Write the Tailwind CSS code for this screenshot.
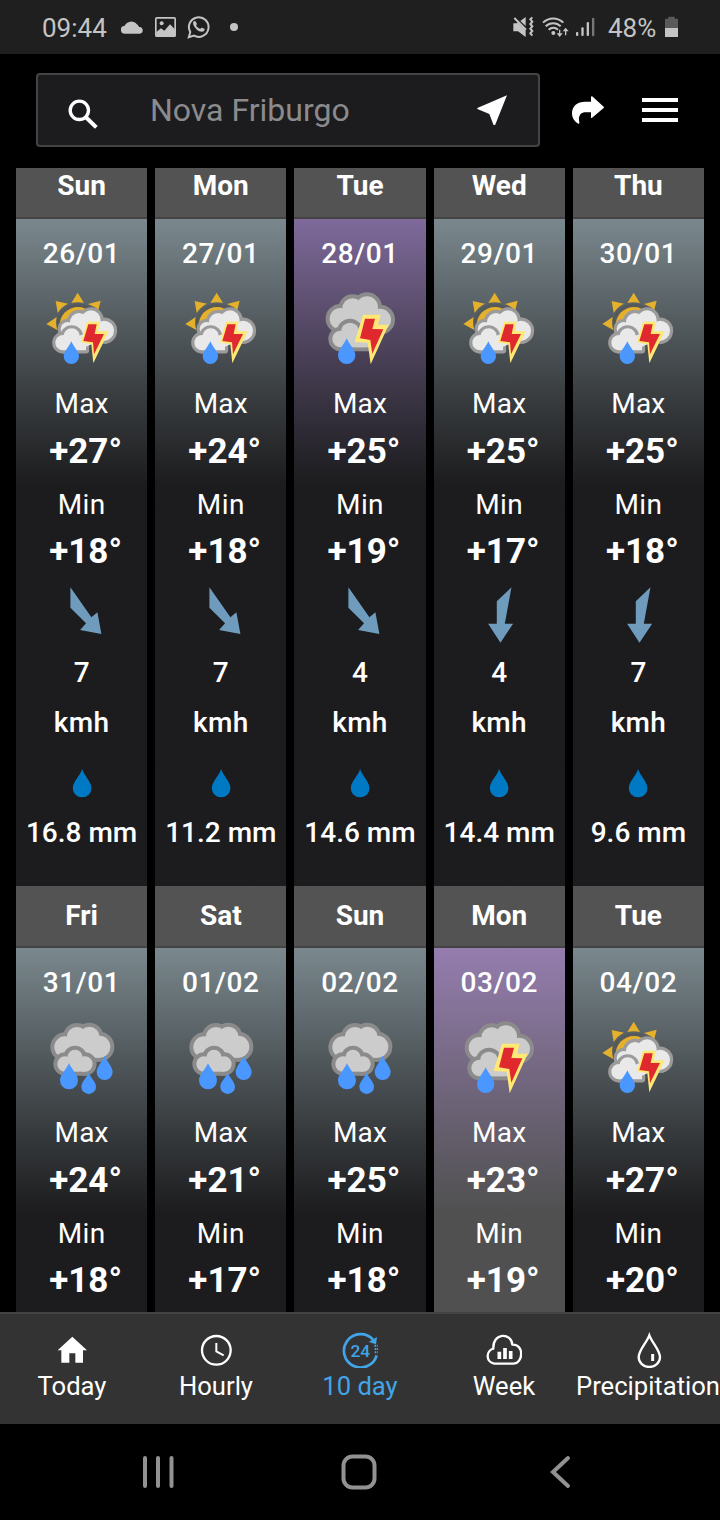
<!DOCTYPE html>
<html lang="en">
<head>
  <meta charset="UTF-8" />
  <meta name="viewport" content="width=device-width, initial-scale=1.0" />
  <title>10 day forecast</title>
  <script src="https://cdn.jsdelivr.net/npm/@tailwindcss/browser@4"></script>
</head>
<body class="bg-black">
  <div class="flex h-[1520px] w-[720px] flex-col overflow-hidden bg-black font-['Roboto',sans-serif] text-white">

    <!-- Status bar -->
    <div class="flex h-[54px] shrink-0 items-center bg-[#1f1f1f] pl-[42px] text-[26px] text-[#c4c4c4]">
      <span class="w-[66px] pt-[2px] leading-none">09:44</span>
      <svg class="ml-[13px] h-[14px] w-[23px]" viewBox="0 0 69 40" fill="currentColor">
        <path d="M12 40a12 12 0 0 1-1-24 22 22 0 0 1 36-5c4 3 6 6 7 9a10 10 0 0 1 2 20z" />
      </svg>
      <svg class="ml-[11px] h-[20px] w-[21px]" viewBox="0 0 63 60" fill="none">
        <rect x="2.5" y="2.5" width="58" height="55" rx="3" stroke="currentColor" stroke-width="5" />
        <circle cx="20" cy="19" r="6" fill="currentColor" />
        <path d="M4 45l14-11 10 7 17-19 16 16v20H4z" fill="currentColor" />
      </svg>
      <svg class="ml-[11px] h-[24px] w-[24px]" viewBox="0 0 24 24" fill="currentColor">
        <path d="M1.8 22.2l1.5-5.2a9.8 9.8 0 1 1 3.7 3.6z" fill="none" stroke="currentColor" stroke-width="2" />
        <path d="M8.6 6.5c-.4-.8-1.8-.6-2.3.6-1 2.4 1.3 5.4 3.4 7.3 2.3 2 5.8 3.2 7.400 1.400.7-.8.8-1.700.2-2l-2.300-1.100c-.5-.2-.8 0-1.500 1-.4.5-3.800-1.700-4.300-3.300-.1-.4.9-1.200.7-1.700z" />
      </svg>
      <span class="ml-[19px] size-[8px] rounded-full bg-[#c4c4c4]"></span>

      <svg class="ml-[275px] h-[22px] w-[21px]" viewBox="0 0 63 66">
        <path d="M1 22h10l3-3 24 24v20L15 46H1z" fill="currentColor" />
        <path d="M22 15L38 3v27z" fill="currentColor" />
        <path d="M4 6l35 35" stroke="currentColor" stroke-width="6" />
        <path d="M58 4l-6 6 6 7-6 7 6 7-6 7 6 7-6 7 6 7" fill="none" stroke="currentColor" stroke-width="6" />
      </svg>
      <svg class="ml-[8px] h-[22px] w-[27px]" viewBox="0 0 81 66" fill="none" stroke="currentColor" stroke-width="6">
        <path d="M3 20a43 43 0 0 1 61 0M11 31a32 32 0 0 1 45 0M20 41a20 20 0 0 1 28 0" />
        <circle cx="34" cy="51" r="6" fill="currentColor" stroke="none" />
        <path d="M53 41v16M71 58V42" stroke-width="4" />
        <path d="M44 52h18l-9 11zM62 46h18L71 35z" fill="currentColor" stroke="none" />
      </svg>
      <svg class="ml-[7px] h-[20px] w-[19px]" viewBox="0 0 57 60" fill="currentColor">
        <rect x="0" y="45" width="7" height="12" rx="3" />
        <rect x="16" y="31" width="7" height="26" rx="3" />
        <rect x="32" y="15" width="7" height="42" rx="3" />
        <rect x="48" y="2" width="7" height="56" rx="3" fill="#777" />
      </svg>
      <span class="ml-[13px] w-[51px] pt-[2px] leading-none">48%</span>
      <svg class="ml-[6px] h-[22px] w-[13px]" viewBox="0 0 39 66">
        <path d="M10 2h19v6h8q2 0 2 3v25H0V11q0-3 2-3h8z" fill="#5a5a5a" />
        <path d="M0 36h39v27H0z" fill="currentColor" />
      </svg>
    </div>

    <!-- Search bar -->
    <div class="flex h-[114px] shrink-0 items-start pl-[36px] pt-[19px]">
      <div class="flex h-[74px] w-[504px] items-center rounded-[4px] border-2 border-[#444] bg-[#1c1c1e]">
        <svg class="ml-[30px] mt-[8px] size-[30px]" viewBox="0 0 90 90" fill="none" stroke="#fff">
          <circle cx="34" cy="34" r="27.5" stroke-width="10" />
          <path d="M53 54L85 85" stroke-width="12" />
        </svg>
        <span class="ml-[52px] w-[327px] text-[32px] leading-none text-[#8b8b8d]">Nova Friburgo</span>
        <svg class="size-[30px]" viewBox="0 0 90 90">
          <path d="M90 1L1 39v3l36 15 13 34h4z" fill="#fff" />
        </svg>
      </div>
      <svg class="ml-[32px] mt-[23px] h-[28px] w-[32px]" viewBox="0 0 96 84" fill="#fff">
        <path d="M57 2q3-3 6 1l32 29q2 2 0 4L62 64q-3 3-5 1V49H41c-16 0-23 11-19 30q1 5-3 4C7 77 0 65 0 52 0 30 16 17 40 17H57z" />
      </svg>
      <div class="ml-[38px] mt-[25px] flex w-[36px] flex-col gap-[6px]">
        <span class="h-[4px] bg-white"></span>
        <span class="h-[4px] bg-white"></span>
        <span class="h-[4px] bg-white"></span>
      </div>
    </div>

    <!-- Forecast -->
    <div class="h-[1144px] shrink-0 overflow-hidden px-[16px]">
      <div id="days" class="-mt-[11px] grid grid-cols-5 gap-x-[8px]"></div>
    </div>

    <!-- Tabs -->
    <div class="grid h-[112px] shrink-0 grid-cols-[repeat(5,144px)] border-t-2 border-[#444] bg-[#333] text-[25.6px] leading-[36px]">
      <div class="flex flex-col items-center pt-[18px]">
        <svg class="size-[36px]" viewBox="162 96 108 108" fill="#fff">
          <path d="M217 110l-44 41h11v37h24v-28h18v28h23v-37h12z" />
        </svg>
        <span>Today</span>
      </div>
      <div class="flex flex-col items-center pt-[18px]">
        <svg class="size-[36px]" viewBox="594 96 108 108" fill="none" stroke="#fff" stroke-width="7">
          <circle cx="649" cy="151" r="43" />
          <path d="M649 129v25l22 12" stroke-width="6" />
        </svg>
        <span>Hourly</span>
      </div>
      <div class="flex flex-col items-center pt-[18px] text-[#41a5e8]">
        <svg class="size-[36px]" viewBox="0 0 108 108" fill="none" stroke="currentColor" stroke-width="8">
          <path d="M93 23a50 50 0 1 0 11 47" />
          <path d="M105 15l-3 22-22-7z" fill="currentColor" stroke="none" />
          <path d="M97 41h10M98 51h10M98 61h9" stroke-width="6" stroke-dasharray="5 2" />
          <text x="55" y="75" text-anchor="middle" font-size="52" font-weight="500" fill="currentColor" stroke="none">24</text>
        </svg>
        <span>10 day</span>
      </div>
      <div class="flex flex-col items-center pt-[18px]">
        <svg class="size-[36px]" viewBox="378 96 108 108" fill="none" stroke="#fff" stroke-width="7">
          <path d="M403 191a23 23 0 0 1-3-45C398 96 455 98 457 134c36-2 34 57 2 57z" stroke-linejoin="round" />
          <path d="M418 155v22M435 144v33M452 153v24" stroke-width="11" />
        </svg>
        <span>Week</span>
      </div>
      <div class="flex flex-col items-center pt-[18px]">
        <svg class="size-[36px]" viewBox="810 96 108 108" fill="none" stroke="#fff" stroke-width="7">
          <path d="M868 106C860 128 836 150 836 172a32 29 0 0 0 64 0C900 150 876 128 868 106z" />
          <path d="M878 162v21" stroke-width="9" />
        </svg>
        <span>Precipitation</span>
      </div>
    </div>

    <!-- Android navigation -->
    <div class="flex h-[96px] shrink-0 items-center text-[#929292]">
      <svg class="ml-[142px] h-[34px] w-[32px]" viewBox="0 0 32 34" stroke="currentColor" stroke-width="4" stroke-linecap="round">
        <path d="M3 3v28M16 3v28M29.5 3v28" />
      </svg>
      <svg class="ml-[167px] size-[36px]" viewBox="0 0 36 36" fill="none" stroke="currentColor" stroke-width="4">
        <rect x="2.5" y="2.5" width="31" height="31" rx="9" />
      </svg>
      <svg class="ml-[173px] h-[34px] w-[21px]" viewBox="0 0 21 34" fill="none" stroke="currentColor" stroke-width="4" stroke-linecap="round">
        <path d="M18 3L3 17l15 14" />
      </svg>
    </div>
  </div>

  <script>
    const bolt = (outer, inner) => `
      <polygon points="${outer}" fill="#ffe873" />
      <polygon points="${inner}" fill="#e0282f" />`;

    // clouds are a union of circles, drawn once with a thick outline and once without
    const cloud = (shapes, fill, line, width) => `
      <g fill="${line}" stroke="${line}" stroke-width="${width}" stroke-linejoin="round">${shapes}</g>
      <g fill="${fill}">${shapes}</g>`;

    const drop = (x, top, cy, r) => {
      const mid = top + (cy - top) * 0.4;
      return `
      <path fill="#4a98ff" d="M${x} ${top}C${x - r * 0.35} ${mid} ${x - r} ${cy - r * 0.6} ${x - r} ${cy}a${r} ${r} 0 0 0 ${2 * r} 0C${x + r} ${cy - r * 0.6} ${x + r * 0.35} ${mid} ${x} ${top}z" />`;
    };

    const icons = {
      sunStorm: `<svg class="h-[90px] w-[80px]" viewBox="95 381 240 270">
        <circle cx="203" cy="496" r="65" fill="#545a5c" />
        <path fill="#e5b02b" d="M202 398l19 31q-19-4-38 0zM136 423l37 8q-20 10-31 28zM271 422l-7 28q-14-12-31-18zM108 492l31-21q-4 18 2 39z" />
        <circle cx="203" cy="496" r="55" fill="#e5b02b" />
        ${cloud('<circle cx="172" cy="507" r="21" /><circle cx="206" cy="486" r="27" /><circle cx="242" cy="480" r="29" /><circle cx="281" cy="512" r="30" /><path d="M175 500h110v42H175z" />', "#e9e9e9", "#9b9b9b", 19)}
        ${cloud('<circle cx="158" cy="548" r="23" /><circle cx="184" cy="530" r="25" /><path d="M158 545l47-10 22 25v11h-69z" />', "#e9e9e9", "#9b9b9b", 19)}
        <path d="M196 532l24-10 44-8v30l-40 18v8h-28z" fill="#e9e9e9" />
        ${drop(183, 544, 589, 23)}
        ${bolt("230,485 268,485 263,514 295,514 249,610 243,553 212,547", "234,493 259,493 253,522 281,522 251,583 248,547 219,543")}
      </svg>`,
      storm: `<svg class="h-[90px] w-[80px]" viewBox="105 381 240 270">
        ${cloud('<circle cx="166" cy="476" r="32" /><circle cx="203" cy="446" r="31" /><circle cx="246" cy="442" r="33" /><circle cx="285" cy="479" r="33" /><path d="M165 450h120v62H165z" />', "#cccccc", "#8b8b8b", 24)}
        ${cloud('<circle cx="167" cy="537" r="25" /><circle cx="195" cy="515" r="27" /><path d="M167 535l50-10 40 20v17h-90z" />', "#cccccc", "#8b8b8b", 24)}
        <path d="M206 514l22-10 50-10v30l-35 38h-38z" fill="#cccccc" />
        ${drop(185, 535, 586, 26)}
        ${bolt("234,464 287,464 279,494 311,494 257,613 248,548 209,546", "240,476 270,476 262,507 295,508 262,581 256,540 225,535")}
      </svg>`,
      rain: `<svg class="h-[90px] w-[80px]" viewBox="95 438 240 270">
        ${cloud('<circle cx="164" cy="531" r="32" /><circle cx="200" cy="502" r="31" /><circle cx="237" cy="500" r="30" /><circle cx="267" cy="530" r="33" /><path d="M165 510h103v53H165z" />', "#cccccc", "#8b8b8b", 24)}
        ${cloud('<circle cx="164" cy="582" r="23" /><circle cx="194" cy="562" r="23" /><circle cx="224" cy="582" r="23" /><path d="M164 575h60v30h-60z" />', "#cccccc", "#8b8b8b", 24)}
        ${drop(176, 580, 631, 27)}${drop(235, 609, 650, 22)}${drop(283, 557, 606, 24)}
      </svg>`,
    };

    const winds = {
      se: `<svg class="h-[78px] w-[60px]" viewBox="124.8 -9 180 234"><polygon points="180,52 180,113 227,160 209,180 273,192 261,127 243,142" fill="#6f9bbd" /></svg>`,
      s: `<svg class="h-[78px] w-[60px]" viewBox="117.6 -9 180 234"><polygon points="245,52 201,94 201,161 175,161 212,218 250,161 225,161" fill="#6f9bbd" /></svg>`,
    };

    const shades = {
      grey: "bg-linear-to-b from-[#7a888d] to-[#1c1c1e] to-[266px]",
      purple: "bg-linear-to-b from-[#7f6a9b] to-[#1c1c1e] to-[266px]",
      pressed: "bg-linear-to-b from-[#957dae] to-[#505050] to-[266px]",
    };

    const days = [
      ["Sun", "26/01", "sunStorm", "+27°", "+18°", "se", "7", "16.8 mm", "grey"],
      ["Mon", "27/01", "sunStorm", "+24°", "+18°", "se", "7", "11.2 mm", "grey"],
      ["Tue", "28/01", "storm", "+25°", "+19°", "se", "4", "14.6 mm", "purple"],
      ["Wed", "29/01", "sunStorm", "+25°", "+17°", "s", "4", "14.4 mm", "grey"],
      ["Thu", "30/01", "sunStorm", "+25°", "+18°", "s", "7", "9.6 mm", "grey"],
      ["Fri", "31/01", "rain", "+24°", "+18°", null, null, null, "grey"],
      ["Sat", "01/02", "rain", "+21°", "+17°", null, null, null, "grey"],
      ["Sun", "02/02", "rain", "+25°", "+18°", null, null, null, "grey"],
      ["Mon", "03/02", "storm", "+23°", "+19°", null, null, null, "pressed"],
      ["Tue", "04/02", "sunStorm", "+27°", "+20°", null, null, null, "grey"],
    ];

    document.getElementById("days").innerHTML = days.map(([day, date, icon, max, min, wind, speed, rain, shade]) => `
      <div class="text-center text-[28px]">
        <div class="h-[62px] border-b-2 border-[#444] bg-[#535353] font-bold ${wind ? "leading-[58px]" : "leading-[60px]"}">${day}</div>
        <div class="flex h-[667px] flex-col items-center ${shades[shade]}">
          <div class="h-[68px] font-medium leading-[70px] tracking-[0.6px]">${date}</div>
          ${icons[icon]}
          <div class="h-[52px] leading-[54px] tracking-[0.2px]">Max</div>
          <div class="h-[44px] pl-[8px] text-[35px] font-bold leading-[46px]">${max}</div>
          <div class="h-[62px] leading-[64px] tracking-[0.4px]">Min</div>
          <div class="h-[32px] pl-[8px] text-[35px] font-bold leading-[34px]">${min}</div>
          ${wind ? `
          ${winds[wind]}
          <div class="h-[54px] font-medium leading-[56px]">${speed}</div>
          <div class="h-[46px] font-medium leading-[48px] tracking-[0.3px]">kmh</div>
          <svg class="h-[64px] w-[60px]" viewBox="117.6 525 180 192">
            <path d="M208 597C202 617 180 635 180 655a28 27 0 0 0 56 0C236 635 214 617 208 597z" fill="#0079c4" />
          </svg>
          <div class="h-[46px] font-medium leading-[48px]">${rain}</div>` : ""}
        </div>
      </div>`).join("");
  </script>
</body>
</html>
